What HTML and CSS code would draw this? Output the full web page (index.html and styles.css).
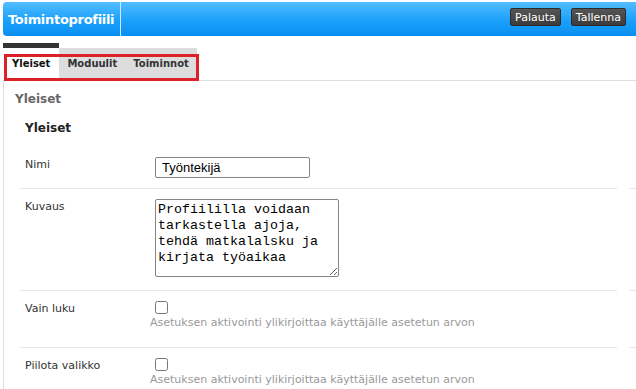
FILE: index.html
```html
<!DOCTYPE html>
<html lang="fi">
<head>
  <meta charset="UTF-8">
  <title>Toimintoprofiili</title>
  <link rel="stylesheet" href="styles.css">
</head>
<body>

  <!-- yläpalkki -->
  <header class="topbar">
    <div class="topbar-title">Toimintoprofiili</div>
    <div class="topbar-actions">
      <button class="btn">Palauta</button>
      <button class="btn">Tallenna</button>
    </div>
  </header>

  <!-- välilehdet -->
  <nav class="tabs">
    <a class="tab active">Yleiset</a>
    <a class="tab">Moduulit</a>
    <a class="tab">Toiminnot</a>
    <div class="tabs-highlight"></div>
  </nav>

  <div class="content">
    <h2 class="section-title">Yleiset</h2>
    <h3 class="group-title">Yleiset</h3>

    <div class="form-row">
      <div class="field">
        <label class="field-label" for="name">Nimi</label>
        <div class="field-control">
          <input type="text" id="name" class="text-input" value="Työntekijä">
        </div>
      </div>
      <div class="field-extra"></div>
    </div>

    <div class="form-row">
      <div class="field">
        <label class="field-label" for="desc">Kuvaus</label>
        <div class="field-control">
          <textarea id="desc" class="text-area">Profiililla voidaan tarkastella ajoja, tehdä matkalalsku ja kirjata työaikaa</textarea>
        </div>
      </div>
      <div class="field-extra"></div>
    </div>

    <div class="form-row">
      <div class="field">
        <label class="field-label" for="readonly">Vain luku</label>
        <div class="field-control">
          <input type="checkbox" id="readonly" class="check">
          <div class="help">Asetuksen aktivointi ylikirjoittaa käyttäjälle asetetun arvon</div>
        </div>
      </div>
      <div class="field-extra"></div>
    </div>

    <div class="form-row">
      <div class="field">
        <label class="field-label" for="hidemenu">Piilota valikko</label>
        <div class="field-control">
          <input type="checkbox" id="hidemenu" class="check">
          <div class="help">Asetuksen aktivointi ylikirjoittaa käyttäjälle asetetun arvon</div>
        </div>
      </div>
      <div class="field-extra"></div>
    </div>
  </div>

</body>
</html>
```

FILE: styles.css
```css
/* perustyylit */
body {
  margin: 0;
  padding: 0;
  font-family: "DejaVu Sans", Verdana, sans-serif;
  font-size: 11px;
  color: #333;
  background: #fff;
  overflow: hidden;
}

/* yläpalkki */
.topbar {
  display: flex;
  align-items: stretch;
  height: 34px;
  margin: 2px 0 0 3px;
  border-radius: 4px 0 0 4px;
  background: linear-gradient(to bottom, #52bcff 0%, #1aa0fb 55%, #0a8ff0 100%);
}
.topbar-title {
  display: flex;
  align-items: center;
  padding: 0 5px;
  width: 107px;
  border-right: 1px solid #cfeaff;
  color: #fff;
  font-weight: bold;
  font-size: 13px;
  letter-spacing: -0.3px;
}
.topbar-actions {
  flex: 1;
  display: flex;
  justify-content: flex-end;
  align-items: flex-start;
  gap: 10px;
  padding: 6px 10px 0 0;
}
.btn {
  height: 18px;
  padding: 0 4px;
  font-family: "DejaVu Sans", Verdana, sans-serif;
  font-size: 11px;
  color: #fff;
  background: linear-gradient(to bottom, #555 0%, #3c3c3c 100%);
  border: 1px solid #2b2b2b;
  border-radius: 2px;
  cursor: pointer;
}

/* välilehdet */
.tabs {
  position: relative;
  display: flex;
  align-items: flex-end;
  margin: 7px 0 0 3px;
}
.tab {
  display: block;
  height: 32px;
  line-height: 32px;
  padding: 0 8px;
  font-weight: bold;
  font-size: 10px;
  color: #333;
  background: #ddd;
  cursor: pointer;
}
.tab.active {
  padding: 0 9px;
  border-top: 5px solid #333;
  background: #fff;
  color: #111;
}
.tabs-highlight {
  position: absolute;
  top: 11px;
  left: 1px;
  width: 195px;
  height: 27px;
  box-sizing: border-box;
  border: 3px solid #dc2127;
  pointer-events: none;
}

/* sisältöalue */
.content {
  margin-left: 3px;
  border-left: 1px solid #ddd;
  border-top: 1px solid #ddd;
  padding: 11px 0 0 11px;
}
.section-title {
  margin: 0;
  font-size: 12px;
  line-height: 15px;
  color: #666;
}
.group-title {
  margin: 14px 0 0 10px;
  font-size: 12px;
  line-height: 15px;
  color: #222;
}

/* lomakerivit */
.form-row {
  display: grid;
  grid-template-columns: 597px 1fr;
  column-gap: 12px;
  margin-left: 5px;
}
.group-title + .form-row {
  margin-top: 11px;
}
.field {
  display: grid;
  grid-template-columns: 130px 1fr;
  padding: 10px 0 10px 5px;
  border-bottom: 1px solid #e8e8e8;
}
.field-extra {
  border-bottom: 1px solid #e8e8e8;
}
.field-label {
  padding-top: 1px;
  line-height: 14px;
  color: #333;
}
.field-control {
  display: flex;
  flex-direction: column;
  align-items: flex-start;
}

.text-input {
  box-sizing: border-box;
  width: 155px;
  height: 21px;
  margin: 0;
  padding: 0 6px;
  font-family: "Liberation Sans", Arial, sans-serif;
  font-size: 13px;
  color: #000;
  border: 1px solid #858585;
  border-radius: 2px;
}
.text-area {
  box-sizing: border-box;
  display: block;
  width: 184px;
  height: 78px;
  margin: 0 0 3px;
  padding: 2px;
  font-family: "Liberation Mono", "Courier New", monospace;
  font-size: 13.33px;
  line-height: 16px;
  color: #000;
  border: 1px solid #858585;
  border-radius: 2px;
}
.check {
  width: 13px;
  height: 13px;
  margin: 0;
}
.help {
  margin: 2px 0 7px -5px;
  line-height: 14px;
  font-size: 11px;
  color: #999;
}
```
